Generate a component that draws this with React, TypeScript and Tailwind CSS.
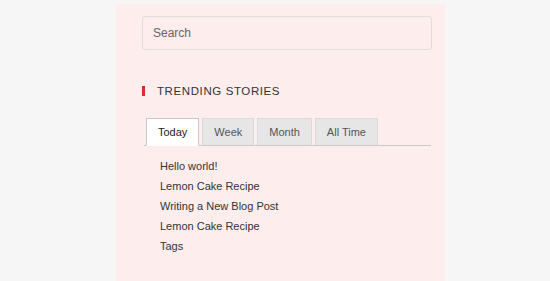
import { useState } from "react";

const tabs = ["Today", "Week", "Month", "All Time"];

const stories = [
  "Hello world!",
  "Lemon Cake Recipe",
  "Writing a New Blog Post",
  "Lemon Cake Recipe",
  "Tags",
];

export default function App() {
  const [activeTab, setActiveTab] = useState("Today");

  return (
    <div className="min-h-[281px] bg-[#f6f6f6] pt-1 font-['Liberation_Sans',Arial,sans-serif]">
      <div className="ml-[116px] w-[329px] min-h-[277px] bg-[#feeded] pl-[26px] pr-[13px] pt-3">
        {/* Search box */}
        <input
          type="text"
          placeholder="Search"
          className="block h-[34px] w-full rounded-[3px] border border-[#e3dcdc] bg-[#feeded] px-[10px] text-[12px] text-[#444] placeholder:text-[#666] outline-none"
        />

        {/* Widget title */}
        <div className="mt-[33px] flex items-center">
          <span className="h-[10px] w-[3px] bg-[#dd2b2b]" />
          <h2 className="ml-[12px] text-[11.5px] leading-4 tracking-[0.6px] text-[#333] uppercase">
            Trending Stories
          </h2>
        </div>

        {/* Tabs */}
        <div className="mt-[19px] ml-[2px] mr-[1px] flex gap-[3px] border-b border-[#c8c8c8] pl-[2px]">
          {tabs.map((tab) => (
            <button
              key={tab}
              onClick={() => setActiveTab(tab)}
              className={`-mb-px h-[28px] border px-[11px] text-[11px] ${
                activeTab === tab
                  ? "border-[#c8c8c8] border-b-white bg-white text-[#222]"
                  : "border-[#dadada] border-b-[#c8c8c8] bg-[#e6e6e6] text-[#555]"
              }`}
            >
              {tab}
            </button>
          ))}
        </div>

        {/* Story list */}
        <ul className="mt-[10px] pl-[18px]">
          {stories.map((story, i) => (
            <li key={i} className="text-[11px] leading-5 text-[#333]">
              {story}
            </li>
          ))}
        </ul>
      </div>
    </div>
  );
}
